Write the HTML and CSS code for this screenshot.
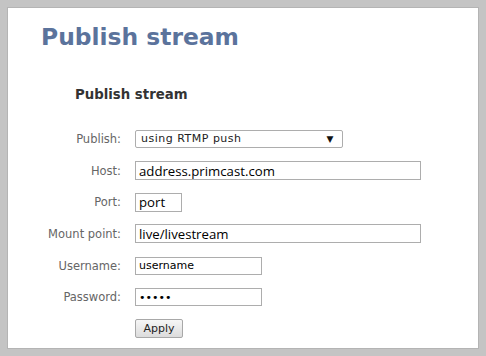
FILE: index.html
```html
<!DOCTYPE html>
<html lang="en">
<head>
  <meta charset="UTF-8">
  <title>Publish stream</title>
  <link rel="stylesheet" href="styles.css">
</head>
<body>
  <div class="frame">
    <h1>Publish stream</h1>
    <h2>Publish stream</h2>

    <form class="stream-form">
      <label for="publish">Publish:</label>
      <div class="field">
        <div class="select" id="publish">
          <span>using RTMP push</span>
          <span class="arrow">&#9660;</span>
        </div>
      </div>

      <label for="host">Host:</label>
      <div class="field"><input type="text" id="host" class="wide big" value="address.primcast.com"></div>

      <label for="port">Port:</label>
      <div class="field"><input type="text" id="port" class="port big" value="port"></div>

      <label for="mount">Mount point:</label>
      <div class="field"><input type="text" id="mount" class="wide big" value="live/livestream"></div>

      <label for="username">Username:</label>
      <div class="field"><input type="text" id="username" class="mid" value="username"></div>

      <label for="password">Password:</label>
      <div class="field"><input type="password" id="password" class="mid" value="admin"></div>

      <span></span>
      <div class="field"><button type="button" class="apply">Apply</button></div>
    </form>
  </div>
</body>
</html>
```

FILE: styles.css
```css
body {
  margin: 0;
  background: #fff;
  font-family: "DejaVu Sans", Verdana, sans-serif;
}

.frame {
  width: 486px;
  height: 356px;
  box-sizing: border-box;
  border: 7px solid #c4c4c4;
  box-shadow: inset 0 0 0 1px #b4b4b4;
  padding: 16px 0 0 34px;
}

h1 {
  margin: 0;
  font-size: 23.4px;
  font-weight: bold;
  color: #5b739c;
  line-height: 28px;
}

h2 {
  margin: 36px 0 0 34px;
  font-size: 13.3px;
  font-weight: bold;
  color: #333;
  line-height: 16px;
}

.stream-form {
  display: grid;
  grid-template-columns: 80px 1fr;
  grid-auto-rows: 31.7px;
  column-gap: 14px;
  align-items: center;
  margin-top: 20px;
}

.stream-form label {
  text-align: right;
  font-size: 11.5px;
  color: #666;
}

.field {
  display: flex;
  align-items: center;
}

input {
  box-sizing: border-box;
  border: 1px solid #adadad;
  padding: 0 3px;
  margin: 0;
  color: #000;
  background: #fff;
  outline: none;
}

.big {
  font-family: "Open Sans", "Noto Sans", sans-serif;
  font-size: 13.2px;
  height: 19px;
}

.wide {
  width: 286px;
}

.port {
  width: 47px;
}

.mid {
  width: 127px;
  height: 18px;
  font-family: "DejaVu Sans", Verdana, sans-serif;
  font-size: 11px;
}

.select {
  box-sizing: border-box;
  width: 208px;
  height: 18px;
  border: 1px solid #adadad;
  border-radius: 2px;
  display: flex;
  align-items: center;
  justify-content: space-between;
  padding: 0 8px 0 5px;
  font-size: 11px;
  letter-spacing: 0.5px;
  color: #222;
}

.arrow {
  font-size: 9px;
  color: #111;
}

.apply {
  box-sizing: border-box;
  width: 48px;
  height: 19px;
  border: 1px solid #a8a8a8;
  border-radius: 2px;
  background: linear-gradient(#f6f6f6, #dcdcdc);
  font-family: "DejaVu Sans", Verdana, sans-serif;
  font-size: 11px;
  color: #222;
  padding: 0;
}
```
